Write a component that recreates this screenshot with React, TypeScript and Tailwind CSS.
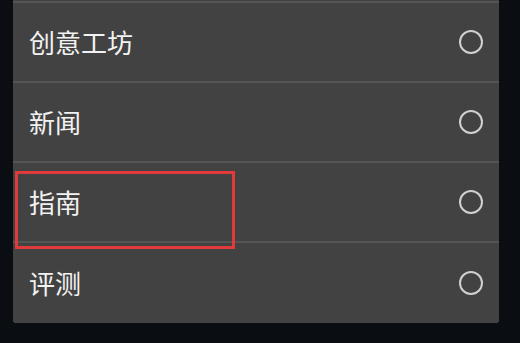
import React from "react";

const items = ["创意工坊", "新闻", "指南", "评测"];

export default function App() {
  return (
    <div
      className="w-[520px] h-[343px] bg-[#0a0d11] overflow-hidden relative"
      style={{ fontFamily: '"Noto Sans CJK SC", "Noto Sans", sans-serif' }}
    >
      <div className="absolute left-[13px] top-[-77px] w-[486px] bg-[#424242] rounded-b-[2px]">
        <div className="h-[80px] border-b-2 border-[#555555]" />
        {items.map((t, i) => (
          <div
            key={t}
            className={`h-[80px] flex items-center justify-between pl-[16px] pr-[16px] ${
              i < items.length - 1 ? "border-b-2 border-[#555555]" : ""
            }`}
          >
            <span className="text-[26px] leading-none text-[#f2f2f2]">{t}</span>
            <span className="w-[24px] h-[24px] rounded-full border-2 border-[#d0d0d0]" />
          </div>
        ))}
      </div>
      <div className="absolute left-[15px] top-[171px] w-[220px] h-[78px] border-[3px] border-[#e03a3a]" />
    </div>
  );
}
